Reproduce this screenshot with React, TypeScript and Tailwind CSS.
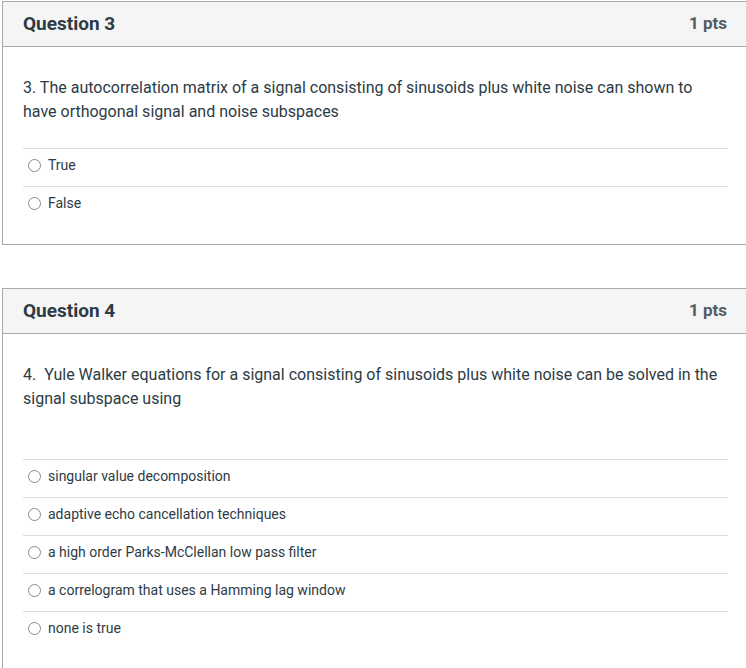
import React from "react";

type Question = {
  title: string;
  points: string;
  prompt: string;
  extraSpace?: boolean;
  options: string[];
};

const questions: Question[] = [
  {
    title: "Question 3",
    points: "1 pts",
    prompt:
      "3. The autocorrelation matrix of a signal consisting of sinusoids plus white noise can shown to have orthogonal signal and noise subspaces",
    options: ["True", "False"],
  },
  {
    title: "Question 4",
    points: "1 pts",
    prompt:
      "4.\u00a0 Yule Walker equations for a signal consisting of sinusoids plus white noise can be solved in the signal subspace using",
    extraSpace: true,
    options: [
      "singular value decomposition",
      "adaptive echo cancellation techniques",
      "a high order Parks-McClellan low pass filter",
      "a correlogram that uses a Hamming lag window",
      "none is true",
    ],
  },
];

function Radio() {
  return <span className="inline-block h-[13px] w-[13px] shrink-0 rounded-full border border-[#8a8a8a] bg-white" />;
}

function QuestionCard({ q }: { q: Question }) {
  return (
    <section className="w-[748px] border border-[#a9a9a9] bg-white">
      <header className="flex h-[45px] items-center justify-between border-b border-[#a9a9a9] bg-[#f5f5f5] pl-[20px] pr-[22px]">
        <h2 className="text-[19px] font-bold text-[#2d3b45]">{q.title}</h2>
        <span className="text-[17px] font-bold text-[#545c63]">{q.points}</span>
      </header>
      <div className="pl-[20px] pr-[21px] pt-[29px] pb-[20px]">
        <p className="text-[16px] leading-[24px] text-[#2d3b45]">{q.prompt}</p>
        {q.extraSpace ? <div className="h-[24px]" /> : null}
        <div className="mt-[24px]">
          {q.options.map((opt) => (
            <label
              key={opt}
              className="flex items-center gap-[7px] border-t border-[#dcdcdc] pt-[6px] pb-[11px] pl-[5px] text-[14px] leading-[20px] text-[#2d3b45]"
            >
              <Radio />
              <span>{opt}</span>
            </label>
          ))}
        </div>
      </div>
    </section>
  );
}

export default function App() {
  return (
    <main className="h-[668px] w-[746px] overflow-hidden bg-white font-['Roboto',sans-serif]">
      <div className="ml-[2px] pt-[1px] flex flex-col gap-[43px]">
        {questions.map((q) => (
          <QuestionCard key={q.title} q={q} />
        ))}
      </div>
    </main>
  );
}
